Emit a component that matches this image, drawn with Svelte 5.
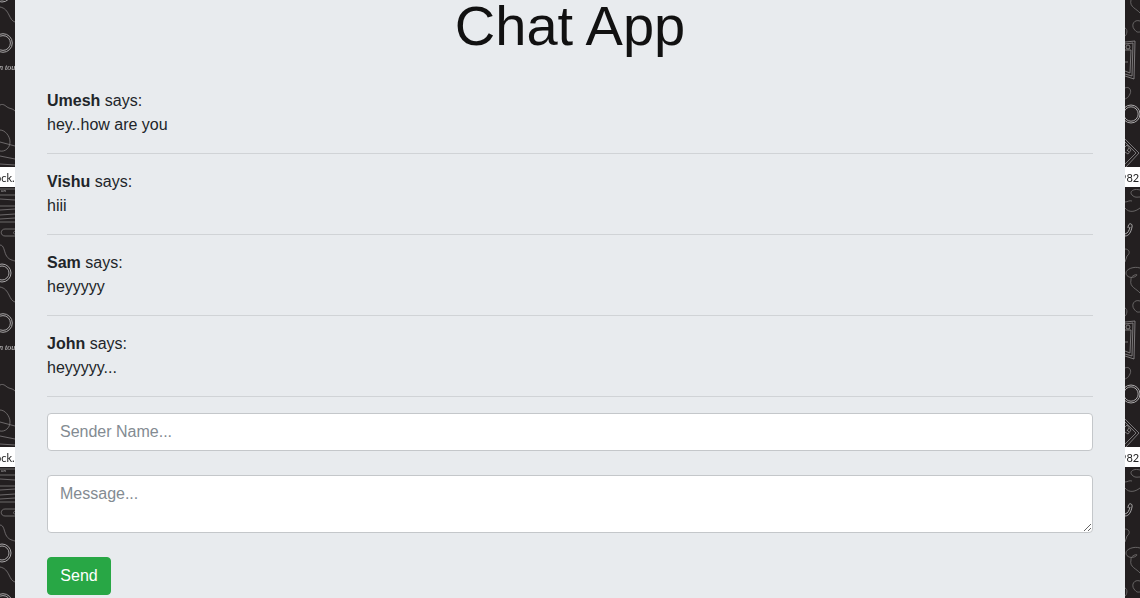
<script>
  let messages = $state([
    { sender: 'Umesh', text: 'hey..how are you' },
    { sender: 'Vishu', text: 'hiii' },
    { sender: 'Sam', text: 'heyyyyy' },
    { sender: 'John', text: 'heyyyyy...' }
  ]);
  let sender = $state('');
  let text = $state('');

  function send(event) {
    event.preventDefault();
    if (!sender.trim() || !text.trim()) return;
    messages.push({ sender, text });
    text = '';
  }
</script>

<div class="page">
  <div class="edge" aria-hidden="true">
    <svg class="doodles">
      <defs>
        <pattern id="left-tile" width="15" height="280" patternUnits="userSpaceOnUse">
          <rect width="15" height="280" fill="#231f20" />
          <g fill="none" stroke="#7d7a7b" stroke-width="0.8">
            <path d="M0 7C5 8 7 11 9 15S12 21 15 22" />
            <path d="M0 105C4 103 6 107 9 108S13 109 15 111" />
            <path d="M0 130C5 130 10 136 10 142S5 152 0 151" />
            <path d="M0 142L15 146M0 156L15 159M0 164L15 165" />
            <path d="M0 189H15M0 195H15M0 199L15 200M0 206H15M0 210L15 209M0 215L15 214M0 219L15 218M0 222H15" />
            <path d="M15 229H5C0 229 0 236 5 236H15M15 231C13 232 13 234 15 234" />
            <path d="M0 245C4 245 4 251 6 255S11 260 15 261" />
          </g>
          <g fill="none" stroke="#b5b3b4" stroke-width="0.9">
            <circle cx="3" cy="43" r="9.3" />
            <circle cx="3" cy="43" r="7.4" />
            <circle cx="2" cy="273" r="9" />
            <circle cx="2" cy="273" r="7" />
            <circle cx="2" cy="-7" r="9" />
            <circle cx="2" cy="-7" r="7" />
          </g>
          <text class="script" x="-1" y="70">n tou</text>
          <rect y="167" width="15" height="20" fill="#fff" />
          <text class="stamp" x="-5" y="182">ock.</text>
          <text class="tiny" x="1" y="192">on</text>
        </pattern>
      </defs>
      <rect width="100%" height="100%" fill="url(#left-tile)" />
    </svg>
  </div>

  <main class="panel">
    <h1>Chat App</h1>

    <div class="messages">
      {#each messages as message}
        <div class="message">
          <p><strong>{message.sender}</strong> says:</p>
          <p>{message.text}</p>
        </div>
      {/each}
    </div>

    <form onsubmit={send}>
      <input type="text" aria-label="Sender Name" placeholder="Sender Name..." bind:value={sender} />
      <textarea aria-label="Message" placeholder="Message..." bind:value={text}></textarea>
      <button type="submit">Send</button>
    </form>
  </main>

  <div class="edge" aria-hidden="true">
    <svg class="doodles">
      <defs>
        <pattern id="right-tile" width="15" height="280" patternUnits="userSpaceOnUse">
          <rect width="15" height="280" fill="#231f20" />
          <g fill="none" stroke="#767374" stroke-width="0.8">
            <path d="M6 0C4 7 12 9 15 13" />
            <path d="M15 21C9 19 6 25 9 29S13 32 15 32" />
            <path d="M0 28C3 29 2 35 0 36" />
            <path d="M0 88C4 86 7 90 5 94S2 98 0 99" />
            <path d="M15 190C8 188 4 192 7 195S12 197 15 197" />
            <path d="M0 202C3 202 4 200 7 201M0 208C4 213 10 212 15 208" />
            <path d="M0 249C4 249 6 253 2 256L0 262" />
            <path d="M15 268C9 266 1 269 1 273S7 279 11 276S5 275 6 280" />
          </g>
          <g fill="none" stroke="#908e8f" stroke-width="0.8">
            <path d="M0 42L10 41L9 79L0 76M0 44L8 43L7 76L0 74M0 50H6L5 73L0 71M0 62H3" />
            <circle cx="3" cy="47" r="2" />
            <path d="M0 139L14 153L1 167M0 142L11 153L0 164M0 147L2 145L6 150L3 154L0 152" />
            <path d="M2 150L4 152M4 148L2 151" />
          </g>
          <g fill="none" stroke="#b9b7b8" stroke-width="0.9">
            <path d="M3 228C3 222 8 223 7 227C6 232 4 236 0 236M5 227C4 231 3 233 0 234" />
            <circle cx="6" cy="114" r="9" />
            <circle cx="6" cy="114" r="7.2" />
          </g>
          <rect y="167" width="15" height="20" fill="#fff" />
          <text class="stamp" x="-5" y="182">982</text>
        </pattern>
      </defs>
      <rect width="100%" height="100%" fill="url(#right-tile)" />
    </svg>
  </div>
</div>

<style>
  :global(body) {
    margin: 0;
    background: #231f20;
  }

  .page {
    display: grid;
    grid-template-columns: 15px minmax(0, 1fr) 15px;
    min-height: 100vh;
    font: 16px/24px "Liberation Sans", Arial, sans-serif;
    color: #212529;
  }

  .edge {
    position: relative;
    overflow: hidden;
  }

  .doodles {
    position: absolute;
    inset: 0;
    width: 100%;
    height: 100%;
  }

  .stamp {
    font: 11px Lato, sans-serif;
    fill: #222;
  }

  .script {
    font: italic 8px "Liberation Serif", serif;
    fill: #d5d3d4;
  }

  .tiny {
    font: 4px "Open Sans", sans-serif;
    fill: #c5c3c4;
  }

  .panel {
    padding: 0 32px;
    background: #e8ebee;
  }

  h1 {
    margin: 0 0 37px;
    font-size: 56px;
    font-weight: 300;
    line-height: 52px;
    text-align: center;
    color: #111;
  }

  .message {
    margin-bottom: 16px;
    padding-bottom: 16px;
    border-bottom: 1px solid #d0d3d6;
  }

  .message p {
    margin: 0;
  }

  form {
    display: flex;
    flex-direction: column;
    align-items: flex-start;
    gap: 24px;
  }

  input,
  textarea {
    box-sizing: border-box;
    width: 100%;
    margin: 0;
    padding: 6px 12px;
    border: 1px solid #c4c7ca;
    border-radius: 4px;
    background: #fff;
    color: #495057;
    font: inherit;
  }

  input {
    height: 38px;
  }

  textarea {
    display: block;
    height: 58px;
    resize: vertical;
  }

  input::placeholder,
  textarea::placeholder {
    color: #838b92;
    opacity: 1;
  }

  button {
    min-width: 64px;
    padding: 6px 12px;
    border: 1px solid #28a745;
    border-radius: 4px;
    background: #28a745;
    color: #fff;
    font: inherit;
    cursor: pointer;
  }
</style>
